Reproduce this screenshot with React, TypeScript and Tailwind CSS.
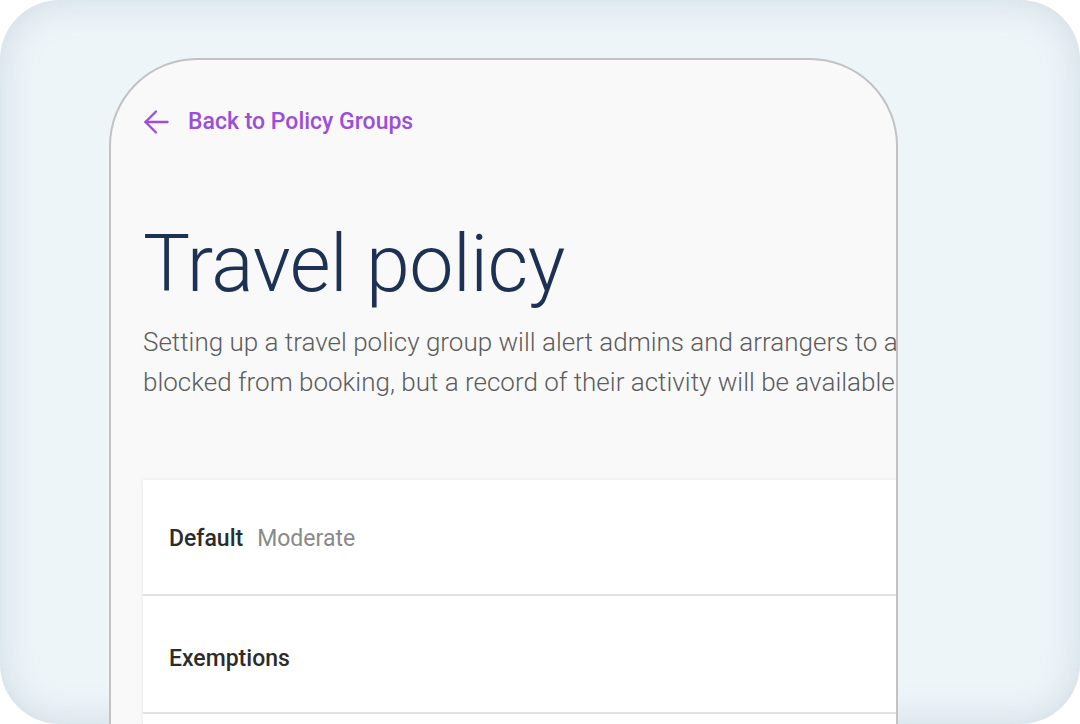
import React from "react";

export default function App() {
  return (
    <div className="w-[1080px] h-[724px] bg-white overflow-hidden" style={{ fontFamily: "Roboto, 'Noto Sans', sans-serif" }}>
      <div className="w-full h-full rounded-[60px] bg-[#edf5f9] shadow-[inset_0_0_36px_rgba(140,160,178,0.32)] overflow-hidden pt-[58px] pl-[109px]">
        <div className="w-[789px] h-[700px] border-2 border-[#c2c2c2] rounded-t-[88px] bg-[#f9f9f9] overflow-hidden pl-[32px] pt-[48px]">
          <div className="flex items-center h-[28px]">
            <svg width="26" height="26" viewBox="0 0 26 26" fill="none" stroke="#9b4fd8" strokeWidth="2.4" strokeLinecap="round" strokeLinejoin="round">
              <path d="M24.5 13H2.5" />
              <path d="M13 2.5 2.5 13 13 23.5" />
            </svg>
            <span className="ml-[19px] text-[23px] font-medium text-[#9b4fd8] leading-[28px] whitespace-nowrap">Back to Policy Groups</span>
          </div>
          <h1 className="mt-[89px] text-[79px] font-light leading-none text-[#1d3155] tracking-[-0.5px] whitespace-nowrap">Travel policy</h1>
          <div className="mt-[18px] text-[26px] font-light text-[#5c5c5c] leading-[40px] whitespace-nowrap">
            <div>Setting up a travel policy group will alert admins and arrangers to any out-of-policy bookings.</div>
            <div>blocked from booking, but a record of their activity will be available in reports.</div>
          </div>
          <div className="mt-[78px] w-[800px] bg-white shadow-[0_0_4px_rgba(0,0,0,0.08)]">
            <div className="h-[116px] border-b-2 border-[#e2e2e2] flex items-center pl-[26px] pt-[5px] text-[23px]">
              <span className="font-medium text-[#2c2c2c]">Default</span>
              <span className="ml-[14px] text-[#8a8a8a]">Moderate</span>
            </div>
            <div className="h-[118px] border-b-2 border-[#e2e2e2] flex items-center pl-[26px] pt-[10px] text-[23px]">
              <span className="font-medium text-[#2c2c2c]">Exemptions</span>
            </div>
            <div className="h-[60px]" />
          </div>
        </div>
      </div>
    </div>
  );
}
